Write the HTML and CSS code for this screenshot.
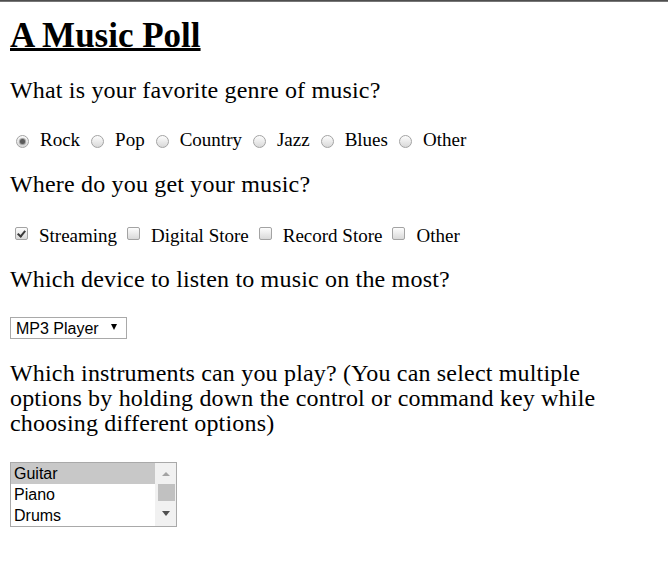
FILE: index.html
```html
<!DOCTYPE html>
<html>
<head>
<meta charset="utf-8">
<title>A Music Poll</title>
<link rel="stylesheet" href="styles.css">
</head>
<body>
<div class="topbar"></div>
<main class="page">
  <h1 class="title">A Music Poll</h1>
  <p class="question q1">What is your favorite genre of music?</p>
  <div class="options radios">
    <label class="opt"><input type="radio" name="genre" checked><span>Rock</span></label>
    <label class="opt"><input type="radio" name="genre"><span>Pop</span></label>
    <label class="opt"><input type="radio" name="genre"><span>Country</span></label>
    <label class="opt"><input type="radio" name="genre"><span>Jazz</span></label>
    <label class="opt"><input type="radio" name="genre"><span>Blues</span></label>
    <label class="opt"><input type="radio" name="genre"><span>Other</span></label>
  </div>
  <p class="question q2">Where do you get your music?</p>
  <div class="options checks">
    <label class="opt"><input type="checkbox" checked><span>Streaming</span></label>
    <label class="opt"><input type="checkbox"><span>Digital Store</span></label>
    <label class="opt"><input type="checkbox"><span>Record Store</span></label>
    <label class="opt"><input type="checkbox"><span>Other</span></label>
  </div>
  <p class="question q3">Which device to listen to music on the most?</p>
  <div class="select-wrap">
    <select class="dropdown">
      <option>MP3 Player</option>
      <option>Phone</option>
      <option>Computer</option>
    </select>
    <span class="arrow"></span>
  </div>
  <p class="question q4">Which instruments can you play? (You can select multiple options by holding down the control or command key while choosing different options)</p>
  <div class="listbox">
    <div class="list">
      <div class="item selected">Guitar</div>
      <div class="item">Piano</div>
      <div class="item">Drums</div>
    </div>
    <div class="scrollbar">
      <span class="up"></span>
      <span class="thumb"></span>
      <span class="down"></span>
    </div>
  </div>
</main>
</body>
</html>
```

FILE: styles.css
```css
html, body {
  margin: 0;
  padding: 0;
  background: #fff;
}
.topbar {
  height: 2px;
  background: linear-gradient(#3a3a3a, #8a8a8a);
}
.page {
  padding: 0 10px;
  font-family: "Liberation Serif", "Times New Roman", serif;
  color: #000;
}
.title {
  margin: 14px 0 0;
  font-size: 35px;
  line-height: 40px;
  font-weight: bold;
  text-decoration: underline;
  text-decoration-thickness: 3px;
  text-underline-offset: 1px;
}
.question {
  margin: 0;
  font-size: 24px;
  line-height: 25px;
  letter-spacing: 0.18px;
}
.q1 { margin-top: 22px; }
.q2 { margin-top: 20px; }
.q3 { margin-top: 19px; }
.q4 { margin-top: 22px; }
.options {
  display: flex;
  align-items: flex-start;
  font-size: 19px;
  line-height: 24px;
}
.radios { margin-top: 25px; }
.checks { margin-top: 27px; }
.opt {
  display: flex;
  align-items: flex-start;
}
.opt input {
  -webkit-appearance: none;
  appearance: none;
  flex: none;
  width: 13px;
  height: 13px;
  margin: 7px 11px 0 11px;
  border: 1px solid #a3a3a3;
  background: linear-gradient(#fdfdfd, #d9d9d9);
  box-sizing: border-box;
  position: relative;
}
.opt:first-child input {
  margin-left: 6px;
}
.opt input[type="radio"] {
  border-radius: 50%;
}
.opt input[type="radio"]:checked::after {
  content: "";
  position: absolute;
  left: 3px;
  top: 3px;
  width: 5px;
  height: 5px;
  border-radius: 50%;
  background: #5a5a5a;
  box-shadow: 0 0 1px 1px #9a9a9a;
}
.checks .opt input {
  margin-top: 3px;
  margin-left: 10px;
  border-radius: 2px;
}
.checks .opt:first-child input {
  margin-left: 5px;
}
.opt input[type="checkbox"]:checked::after {
  content: "";
  position: absolute;
  left: 3px;
  top: 1px;
  width: 3px;
  height: 6px;
  border: solid #3a3a3a;
  border-width: 0 2px 2px 0;
  transform: rotate(40deg);
}
.select-wrap {
  position: relative;
  display: inline-block;
  vertical-align: top;
  margin-top: 25px;
}
.dropdown {
  -webkit-appearance: none;
  appearance: none;
  font-family: "Liberation Sans", Arial, sans-serif;
  font-size: 16px;
  height: 22px;
  width: 117px;
  padding: 0 0 0 5px;
  border: 1px solid #a9a9a9;
  border-radius: 0;
  background: #fff;
  color: #000;
  display: block;
}
.arrow {
  position: absolute;
  right: 10px;
  top: 7px;
  width: 0;
  height: 0;
  border-left: 3.5px solid transparent;
  border-right: 3.5px solid transparent;
  border-top: 6px solid #000;
  pointer-events: none;
}
.listbox {
  display: flex;
  width: 167px;
  height: 65px;
  margin-top: 26px;
  border: 1px solid #a9a9a9;
  box-sizing: border-box;
  font-family: "Liberation Sans", Arial, sans-serif;
  font-size: 16px;
}
.list {
  flex: 1;
}
.item {
  height: 21px;
  line-height: 21px;
  padding-left: 3px;
}
.item.selected {
  background: #c8c8c8;
}
.scrollbar {
  width: 21px;
  background: #f1f1f1;
  display: flex;
  flex-direction: column;
  align-items: center;
}
.up {
  margin-top: 9px;
  width: 0;
  height: 0;
  border-left: 4.5px solid transparent;
  border-right: 4.5px solid transparent;
  border-bottom: 4.5px solid #a3a3a3;
}
.thumb {
  margin-top: 8px;
  margin-left: 1px;
  width: 17px;
  height: 17px;
  background: #c1c1c1;
}
.down {
  margin-top: 10px;
  width: 0;
  height: 0;
  border-left: 4.5px solid transparent;
  border-right: 4.5px solid transparent;
  border-top: 5px solid #505050;
}
```
